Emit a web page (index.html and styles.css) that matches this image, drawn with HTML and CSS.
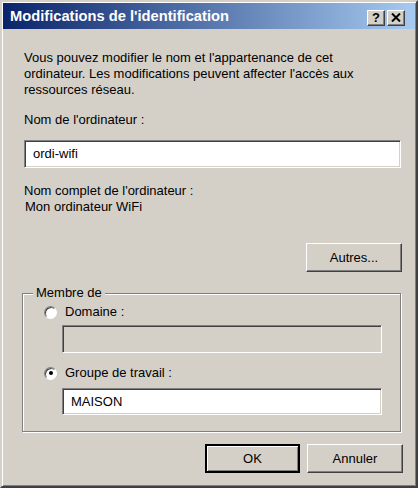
FILE: index.html
```html
<!DOCTYPE html>
<html lang="fr">
<head>
    <meta charset="UTF-8">
    <title>Modifications de l'identification</title>
    <link rel="stylesheet" href="styles.css">
</head>
<body>
    <div class="window">
        <div class="titlebar">
            <span class="title">Modifications de l'identification</span>
            <div class="caption-buttons">
                <span class="cap-btn help">?</span>
                <span class="cap-btn close">
                    <svg width="10" height="9" viewBox="0 0 10 9">
                        <path d="M1 0.5 L9 8.5 M9 0.5 L1 8.5" stroke="#000" stroke-width="2"/>
                    </svg>
                </span>
            </div>
        </div>

        <div class="content">
            <p class="desc">Vous pouvez modifier le nom et l'appartenance de cet<br>ordinateur. Les modifications peuvent affecter l'accès aux<br>ressources réseau.</p>

            <div class="label name-label">Nom de l'ordinateur :</div>
            <div class="textbox name-box">ordi-wifi</div>

            <div class="label full-label">Nom complet de l'ordinateur :</div>
            <div class="label full-value">Mon ordinateur WiFi</div>

            <div class="row-right">
                <span class="btn">Autres...</span>
            </div>

            <fieldset class="group">
                <legend>Membre de</legend>

                <div class="option first">
                    <span class="radio"></span>
                    <span>Domaine :</span>
                </div>
                <div class="textbox sub disabled"></div>

                <div class="option second">
                    <span class="radio checked"></span>
                    <span>Groupe de travail :</span>
                </div>
                <div class="textbox sub workgroup">MAISON</div>
            </fieldset>

            <div class="actions">
                <span class="btn default">OK</span>
                <span class="btn">Annuler</span>
            </div>
        </div>
    </div>
</body>
</html>
```

FILE: styles.css
```css
body {
    margin: 0;
    background-color: #fff;
    font-family: "Liberation Sans", Arial, sans-serif;
    font-size: 13px;
    color: #000;
}

.window {
    width: 418px;
    height: 488px;
    box-sizing: border-box;
    padding: 1px;
    background-color: #d4d0c8;
    border: 2px solid;
    border-color: #d4d0c8 #404040 #404040 #d4d0c8;
    box-shadow: inset 1px 1px 0 #fff, inset -1px -1px 0 #808080;
}

.titlebar {
    display: flex;
    align-items: center;
    justify-content: space-between;
    height: 26px;
    padding: 0 10px 0 7px;
    background: linear-gradient(to right, #0a246a, #a6caf0);
}

.title {
    color: #fff;
    font-weight: bold;
    font-size: 14.7px;
}

.caption-buttons {
    display: flex;
    gap: 2px;
    margin-top: 3px;
}

.cap-btn {
    display: flex;
    align-items: center;
    justify-content: center;
    width: 18px;
    height: 16px;
    box-sizing: border-box;
    background-color: #d4d0c8;
    border: 1px solid;
    border-color: #fff #404040 #404040 #fff;
    box-shadow: inset -1px -1px 0 #808080;
    font-weight: bold;
    font-size: 13px;
    line-height: 1;
}

.content {
    padding: 0 14px 0 21px;
}

.desc {
    margin: 21px 0 0;
    line-height: 16px;
}

.label {
    line-height: 16px;
}

.name-label {
    margin-top: 14px;
}

.textbox {
    box-sizing: border-box;
    height: 28px;
    padding: 5px 8px 0;
    background-color: #fff;
    border: 1px solid;
    border-color: #808080 #fff #fff #808080;
    box-shadow: inset 1px 1px 0 #404040, inset -1px -1px 0 #d4d0c8;
    line-height: 16px;
}

.name-box {
    margin-top: 12px;
}

.full-label {
    margin-top: 15px;
}

.full-value {
    padding-left: 1px;
}

.row-right {
    display: flex;
    justify-content: flex-end;
    margin-top: 28px;
    margin-right: -1px;
}

.btn {
    display: flex;
    align-items: center;
    justify-content: center;
    width: 96px;
    height: 29px;
    box-sizing: border-box;
    border: 1px solid;
    border-color: #fff #404040 #404040 #fff;
    box-shadow: inset -1px -1px 0 #808080;
    background-color: #d4d0c8;
}

.btn.default {
    width: 95px;
    border: 2px solid #000;
    box-shadow: inset 1px 1px 0 #fff, inset -1px -1px 0 #808080;
}

.group {
    margin: 13px 0 0 -2px;
    padding: 0 18px 16px 0;
    border: 1px solid #808080;
    box-shadow: inset 1px 1px 0 #fff, 1px 1px 0 #fff;
}

.group legend {
    margin-left: 10px;
    padding: 0 3px;
    line-height: 16px;
    background-color: #d4d0c8;
}

.option {
    display: flex;
    align-items: center;
    gap: 8px;
    padding-left: 21px;
    line-height: 16px;
}

.option.first {
    margin-top: 3px;
}

.option.second {
    margin-top: 12px;
}

.radio {
    position: relative;
    width: 13px;
    height: 13px;
    box-sizing: border-box;
    border-radius: 50%;
    background-color: #fff;
    border: 1px solid;
    border-color: #808080 #fff #fff #808080;
    box-shadow: inset 1px 1px 0 #404040;
}

.radio.checked::after {
    content: "";
    position: absolute;
    left: 3.5px;
    top: 3.5px;
    width: 4px;
    height: 4px;
    border-radius: 50%;
    background-color: #000;
}

.textbox.sub {
    margin-left: 39px;
    margin-top: 5px;
}

.textbox.disabled {
    background-color: #d4d0c8;
}

.textbox.workgroup {
    height: 27px;
    margin-top: 7px;
}

.actions {
    display: flex;
    justify-content: flex-end;
    gap: 7px;
    margin-top: 12px;
    margin-right: -2px;
}
```
